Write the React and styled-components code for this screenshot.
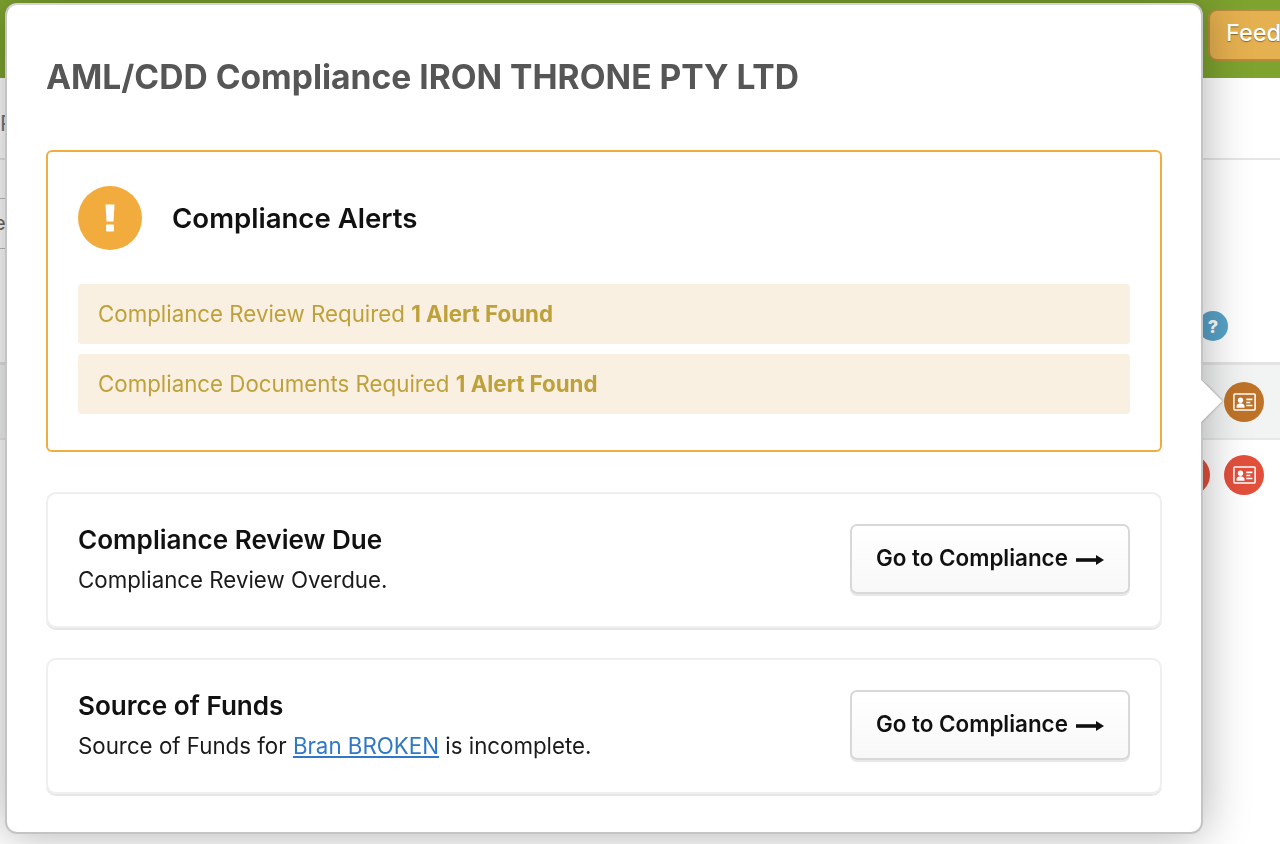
import React from 'react';
import styled, { createGlobalStyle } from 'styled-components';

const GlobalStyle = createGlobalStyle`
  html, body {
    margin: 0;
    height: 100%;
    background: #fff;
    overflow: hidden;
    font-family: Inter, "Liberation Sans", sans-serif;
    color: #111;
  }
`;

const Page = styled.div`
  width: 1280px;
  height: 844px;
  overflow: hidden;
`;

const Header = styled.header`
  height: 78px;
  background: #7ea32f;
  display: flex;
  padding: 9px 0 0 1208px;
  box-sizing: border-box;
  overflow: hidden;
`;

const FeedbackButton = styled.div`
  flex: none;
  height: 52px;
  width: 130px;
  box-sizing: border-box;
  padding: 8px 0 0 16px;
  background: #e5b04f;
  border: 2px solid #b98a3e;
  border-radius: 9px;
  color: #fff;
  font-size: 23.5px;
  line-height: 28px;
  font-weight: 500;
  text-shadow: 0 1px 1px #8a6a2c;
`;

const SubBar = styled.div`
  height: 82px;
  border-bottom: 2px solid #e6e6e6;
  color: #777;
  font-size: 22px;
  padding-top: 32px;
  box-sizing: border-box;
`;

const HelpRow = styled.div`
  height: 202px;
  display: flex;
  justify-content: space-between;
  align-items: flex-end;
  padding: 0 52px 21px 0;
  box-sizing: border-box;
`;

const FilterField = styled.div`
  align-self: flex-start;
  width: 120px;
  height: 51px;
  margin-top: 38px;
  padding-top: 10px;
  box-sizing: border-box;
  border-top: 1px solid #bdbdbd;
  border-bottom: 1px solid #bdbdbd;
  color: #666;
  font-size: 20px;
  line-height: 28px;
  text-indent: -6px;
`;

const Row = styled.div`
  height: ${p => p.$height}px;
  box-sizing: border-box;
  display: flex;
  justify-content: flex-end;
  align-items: center;
  gap: 14px;
  padding-right: 16px;
  background: ${p => (p.$active ? '#f2f4f4' : '#fff')};
  border-top: ${p => (p.$active ? '3px solid #e3e3e3' : 'none')};
  border-bottom: ${p => (p.$active ? '2px solid #e8e8e8' : 'none')};
`;

const RowLink = styled.a`
  margin: 4px auto 0 -12px;
  color: #2b6cbf;
  font-size: 20px;
  font-weight: 600;
`;

const Round = styled.div`
  width: 40px;
  height: 40px;
  flex: none;
  border-radius: 50%;
  display: flex;
  align-items: center;
  justify-content: center;
  background: ${p => p.$color};
`;

const HelpBadge = styled.div`
  width: 30px;
  height: 30px;
  border-radius: 50%;
  background: #58a3c9;
  color: #fff;
  font-size: 18px;
  font-weight: 800;
  display: flex;
  align-items: center;
  justify-content: center;
`;

const Modal = styled.div`
  position: fixed;
  left: 5px;
  top: 3px;
  width: 1198px;
  height: 831px;
  box-sizing: border-box;
  padding: 0 39px;
  background: #fff;
  border: 2px solid #c4c4c4;
  border-top-color: #d4d4d4;
  border-radius: 12px;
  box-shadow: 0 0 48px rgba(0, 0, 0, 0.32);
`;

const Pointer = styled.div`
  position: absolute;
  left: 1179px;
  top: 381px;
  width: 30px;
  height: 30px;
  background: #fff;
  transform: rotate(45deg);
  box-shadow: 1px -1px 2px rgba(0, 0, 0, 0.2);
  clip-path: polygon(0 0, 130% -30%, 130% 130%);
`;

const Title = styled.h1`
  margin: 0;
  height: 145px;
  box-sizing: border-box;
  padding-top: 52px;
  font-size: 33.6px;
  line-height: 40px;
  font-weight: 700;
  color: #565656;
  white-space: nowrap;
`;

const AlertBox = styled.section`
  height: 302px;
  box-sizing: border-box;
  padding: 34px 30px 0;
  border: 2px solid #f0ad3f;
  border-radius: 6px;
`;

const AlertHead = styled.div`
  display: flex;
  align-items: center;
  gap: 30px;
  margin-bottom: 34px;
`;

const AlertIcon = styled.div`
  width: 64px;
  height: 64px;
  border-radius: 50%;
  background: #f2ac3e;
  display: flex;
  align-items: center;
  justify-content: center;
`;

const AlertTitle = styled.h2`
  margin: 0;
  font-size: 27.6px;
  font-weight: 600;
  color: #111;
`;

const AlertLine = styled.div`
  height: 60px;
  box-sizing: border-box;
  margin-bottom: 10px;
  padding: 0 0 2px 20px;
  display: flex;
  align-items: center;
  white-space: pre;
  font-size: 22.3px;
  color: #bfa13c;
  background: #f9f0e1;
  border-radius: 4px;
  b {
    font-weight: 700;
  }
`;

const Card = styled.section`
  height: 136px;
  margin-top: ${p => p.$top}px;
  box-sizing: border-box;
  padding: 0 30px;
  display: flex;
  align-items: center;
  justify-content: space-between;
  border: 2px solid #efefef;
  border-radius: 10px;
  box-shadow: 0 2px 0 #e6e6e6;
`;

const CardBody = styled.div`
  margin-bottom: 2px;
`;

const CardTitle = styled.h3`
  margin: 0 0 11px;
  font-size: 26.1px;
  line-height: 30px;
  font-weight: 600;
  color: #111;
`;

const CardText = styled.p`
  margin: 0;
  font-size: 22.3px;
  line-height: 28px;
  color: #1a1a1a;
  a {
    color: #2f78c8;
  }
`;

const GoButton = styled.button`
  width: 280px;
  height: 70px;
  margin-bottom: 2px;
  padding: 0 0 4px;
  display: flex;
  align-items: center;
  justify-content: center;
  gap: 8px;
  font-family: inherit;
  font-size: 22.4px;
  font-weight: 600;
  color: #111;
  background: linear-gradient(#fff, #f8f8f8);
  border: 2px solid #d8d8d8;
  border-radius: 7px;
  box-shadow: 0 2px 0 #e8e8e8;
  svg {
    margin-top: 6px;
  }
`;

const IdCard = () => (
  <svg width="23" height="18" viewBox="0 0 26 20" fill="none">
    <rect x="1" y="1" width="24" height="18" rx="1" stroke="#fff" strokeWidth="1.8" />
    <circle cx="8.500" cy="8" r="3" fill="#fff" />
    <path d="M4 16.500v-2c0-2 2.500-3 4.500-3s4.500 1 4.500 3v2z" fill="#fff" />
    <path d="M15 7h7M15 10.500h4.500M15 14h7" stroke="#fff" strokeWidth="1.8" />
  </svg>
);

const Arrow = () => (
  <svg width="28" height="14" viewBox="0 0 28 14">
    <path d="M0 5.200h21V8.800H0z" fill="#111" />
    <path d="M20 2L28 7 20 12z" fill="#111" />
  </svg>
);

const Exclaim = () => (
  <svg width="10" height="28" viewBox="0 0 10 28">
    <path d="M0.500 0.500h9L8.500 17.500h-7z" fill="#fff" />
    <rect x="1" y="20.500" width="8" height="7" rx="1" fill="#fff" />
  </svg>
);

const reviews = [
  { id: 'review', top: 40, title: 'Compliance Review Due', text: <>Compliance Review Overdue.</> },
  {
    id: 'funds',
    top: 30,
    title: 'Source of Funds',
    text: <>Source of Funds for <a href="#bran">Bran BROKEN</a> is incomplete.</>
  }
];

const App = () => (
  <Page>
    <GlobalStyle />
    <Header>
      <FeedbackButton>Feedback</FeedbackButton>
    </Header>
    <SubBar>P</SubBar>
    <HelpRow>
      <FilterField>e</FilterField>
      <HelpBadge>?</HelpBadge>
    </HelpRow>
    <Row $active $height={78}>
      <Round $color="#bf7328"><IdCard /></Round>
    </Row>
    <Row $height={70}>
      <RowLink>v</RowLink>
      <Round $color="#e2503c" />
      <Round $color="#e2503c"><IdCard /></Round>
    </Row>
    <Modal>
      <Pointer />
      <Title>AML/CDD Compliance IRON THRONE PTY LTD</Title>
      <AlertBox>
        <AlertHead>
          <AlertIcon><Exclaim /></AlertIcon>
          <AlertTitle>Compliance Alerts</AlertTitle>
        </AlertHead>
        <AlertLine>Compliance Review Required <b>1 Alert Found</b></AlertLine>
        <AlertLine>Compliance Documents Required <b>1 Alert Found</b></AlertLine>
      </AlertBox>
      {reviews.map(r => (
        <Card key={r.id} $top={r.top}>
          <CardBody>
            <CardTitle>{r.title}</CardTitle>
            <CardText>{r.text}</CardText>
          </CardBody>
          <GoButton>Go to Compliance <Arrow /></GoButton>
        </Card>
      ))}
    </Modal>
  </Page>
);

export default App;
